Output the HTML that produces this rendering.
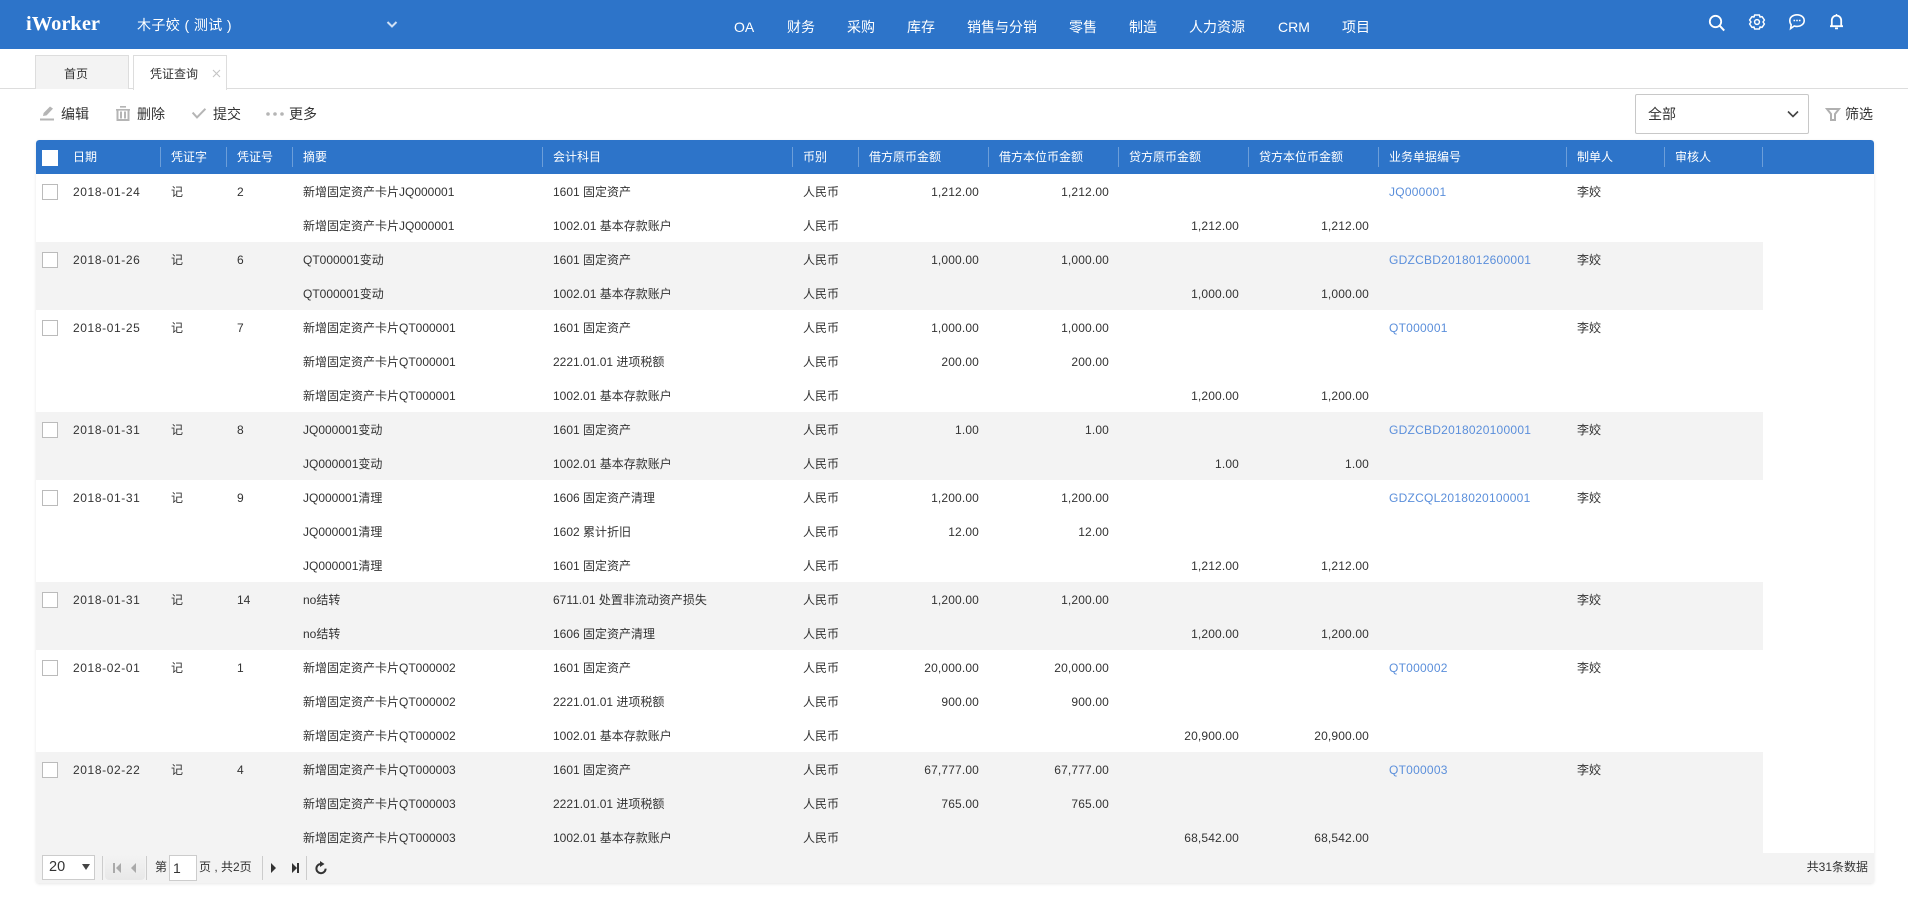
<!DOCTYPE html>
<html lang="zh">
<head>
<meta charset="utf-8">
<title>iWorker</title>
<style>
*{box-sizing:border-box}
html,body{margin:0;padding:0;width:1908px;height:905px;overflow:hidden;background:#fff;font-family:"Liberation Sans","Noto Sans CJK SC",sans-serif;color:#333;font-size:12px}
.a{position:absolute;white-space:nowrap}
#top{position:absolute;left:0;top:0;width:1908px;height:49px;background:#2d74c9;color:#fff}
#top .n{position:absolute;top:0;line-height:54px;font-size:14px;white-space:nowrap}
.tab{position:absolute;top:55px;width:94px;height:34px;border:1px solid #ddd;border-bottom:none;line-height:36px;font-size:12px}
#wrap{position:absolute;left:36px;top:140px;width:1838px;height:743px;background:#fff;box-shadow:0 1px 3px rgba(0,0,0,.1);border-radius:3px;overflow:hidden}
#hb{position:absolute;left:0;top:0;width:1838px;height:34px;background:#2d74c9;border-radius:3px 3px 0 0}
table{position:absolute;left:0;top:0;border-collapse:collapse;table-layout:fixed;width:1727px}
th{position:relative;height:34px;padding:0 0 0 11px;text-align:left;font-weight:normal;color:#fff;font-size:12px;white-space:nowrap;line-height:34px}
th i{position:absolute;left:0;top:7px;width:1px;height:20px;background:rgba(255,255,255,.3)}
td{position:relative;height:34px;padding:2px 0 0 11px;font-size:12px;line-height:32px;white-space:nowrap;color:#333;overflow:hidden}
td:first-child,th:first-child{padding-left:37px}
td.r{text-align:right;padding:2px 9px 0 0;letter-spacing:.15px}
td.d{letter-spacing:.6px}
tr.g td{background:#f3f3f3}
td a{color:#5b8fdb;text-decoration:none;letter-spacing:.25px}
.cb{position:absolute;left:6px;top:10px;width:16px;height:16px;background:#fff;border:1px solid #bbb}
th .cb{border:none}
#bar{position:absolute;left:0;top:713px;width:1838px;height:30px;background:#f3f3f3}
.sep{position:absolute;top:3px;width:1px;height:24px;background:#ccc}
svg{position:absolute;overflow:visible}
</style>
</head>
<body>
<div id="top">
  <div class="a" style="left:26px;top:0;line-height:49px;font-family:'Liberation Serif',serif;font-weight:bold;font-size:20.5px;">iWorker</div>
  <div class="a" style="left:137px;top:0;line-height:50px;font-size:14px;letter-spacing:.4px">木子姣 ( 测试 )</div>
  <svg style="left:386px;top:20px" width="12" height="10" viewBox="0 0 12 10"><path d="M1.5 2 L6 6.5 L10.5 2" fill="none" stroke="#cfe0f5" stroke-width="2"/></svg>
  <span class="n" style="left:734px">OA</span>
  <span class="n" style="left:787px">财务</span>
  <span class="n" style="left:847px">采购</span>
  <span class="n" style="left:907px">库存</span>
  <span class="n" style="left:967px">销售与分销</span>
  <span class="n" style="left:1069px">零售</span>
  <span class="n" style="left:1129px">制造</span>
  <span class="n" style="left:1189px">人力资源</span>
  <span class="n" style="left:1278px">CRM</span>
  <span class="n" style="left:1342px">项目</span>
  <svg style="left:1709px;top:15px" width="16" height="16" viewBox="0 0 16 16"><circle cx="6.5" cy="6.5" r="5.7" fill="none" stroke="#fff" stroke-width="1.8"/><path d="M10.8 10.8 L15.2 15.6" stroke="#fff" stroke-width="2"/></svg>
  <svg style="left:1749px;top:14px" width="16" height="16" viewBox="0 0 16 16"><path d="M5.6 1 H10.4 L11 3 L13 2.6 L15.4 6 L14 8 L15.4 10 L13 13.4 L11 13 L10.4 15 H5.6 L5 13 L3 13.4 L.6 10 L2 8 L.6 6 L3 2.6 L5 3 Z" fill="none" stroke="#fff" stroke-width="1.5" stroke-linejoin="round"/><circle cx="8" cy="8" r="2.4" fill="none" stroke="#fff" stroke-width="1.5"/></svg>
  <svg style="left:1789px;top:14px" width="16" height="17" viewBox="0 0 16 17"><path d="M8 .8 C12 .8 15.2 3.2 15.2 6.6 C15.2 10 12 12.4 8 12.4 C7 12.4 6 12.3 5.2 12 L1.6 14.6 L2.2 10.8 C1.2 9.6 .8 8.2 .8 6.6 C.8 3.2 4 .8 8 .8 Z" fill="none" stroke="#fff" stroke-width="1.6"/><path d="M4.5 6.5h1.6M7.2 6.5h1.6M9.9 6.5h1.6" stroke="#fff" stroke-width="1.6"/></svg>
  <svg style="left:1829px;top:14px" width="15" height="16" viewBox="0 0 15 16"><path d="M1 12.2 H14 M2.8 12 V6.5 C2.8 3.6 4.8 1.6 7.5 1.6 C10.2 1.6 12.2 3.6 12.2 6.5 V12" fill="none" stroke="#fff" stroke-width="1.8"/><path d="M6 13.5 H9 V15.2 H6 Z M6.8 0 H8.2 V2 H6.8 Z" fill="#fff"/></svg>
</div>

<div class="a" style="left:0;top:88px;width:1908px;height:1px;background:#ddd"></div>
<div class="tab" style="left:35px;background:#f3f3f3;padding-left:28px">首页</div>
<div class="tab" style="left:133px;background:#fff;height:35px;padding-left:16px;">凭证查询<svg style="left:77.5px;top:13px" width="9" height="9" viewBox="0 0 9 9"><path d="M1 1 L8 8 M8 1 L1 8" stroke="#c4c4c4" stroke-width="1.1"/></svg></div>

<svg style="left:40px;top:105px" width="15" height="16" viewBox="0 0 15 16"><path d="M0 14.5 H14" stroke="#b5b5b5" stroke-width="2"/><path d="M3 11 L3.6 8 L10 1.5 L13 3.6 L6.6 10.4 Z" fill="#b5b5b5"/></svg>
<div class="a" style="left:61px;top:104px;font-size:14px;line-height:20px">编辑</div>
<svg style="left:116px;top:106px" width="14" height="15" viewBox="0 0 14 15"><path d="M4 .8 H10 M0 3.8 H14" stroke="#b5b5b5" stroke-width="1.6"/><path d="M1.5 4 V14 H12.5 V4 M5 5.5 V12.5 M9 5.5 V12.5" fill="none" stroke="#b5b5b5" stroke-width="2"/></svg>
<div class="a" style="left:137px;top:104px;font-size:14px;line-height:20px">删除</div>
<svg style="left:192px;top:108px" width="14" height="11" viewBox="0 0 14 11"><path d="M.6 4.6 L5 9.4 L13.4 .8" fill="none" stroke="#b5b5b5" stroke-width="2"/></svg>
<div class="a" style="left:213px;top:104px;font-size:14px;line-height:20px">提交</div>
<svg style="left:266px;top:112px" width="18" height="4" viewBox="0 0 18 4"><circle cx="2" cy="2" r="1.8" fill="#b5b5b5"/><circle cx="9" cy="2" r="1.8" fill="#b5b5b5"/><circle cx="16" cy="2" r="1.8" fill="#b5b5b5"/></svg>
<div class="a" style="left:289px;top:104px;font-size:14px;line-height:20px">更多</div>

<div class="a" style="left:1635px;top:94px;width:174px;height:40px;border:1px solid #c8c8c8;border-radius:2px;font-size:14px;line-height:38px;padding-left:12px">全部<svg style="left:151px;top:15px" width="12" height="9" viewBox="0 0 12 9"><path d="M1 1.5 L6 6.5 L11 1.5" fill="none" stroke="#444" stroke-width="1.6"/></svg></div>
<svg style="left:1826px;top:108px" width="14" height="13" viewBox="0 0 14 13"><path d="M1 1 H13 L9 6 V12 H5 V6 Z" fill="none" stroke="#b0b0b0" stroke-width="2"/></svg>
<div class="a" style="left:1845px;top:104px;font-size:14px;line-height:20px">筛选</div>

<div id="wrap">
<div id="hb"></div>
<table>
<colgroup><col style="width:124px"><col style="width:66px"><col style="width:66px"><col style="width:250px"><col style="width:250px"><col style="width:66px"><col style="width:130px"><col style="width:130px"><col style="width:130px"><col style="width:130px"><col style="width:188px"><col style="width:98px"><col style="width:99px"></colgroup>
<tr><th><span class="cb"></span>日期</th><th><i></i>凭证字</th><th><i></i>凭证号</th><th><i></i>摘要</th><th><i></i>会计科目</th><th><i></i>币别</th><th><i></i>借方原币金额</th><th><i></i>借方本位币金额</th><th><i></i>贷方原币金额</th><th><i></i>贷方本位币金额</th><th><i></i>业务单据编号</th><th><i></i>制单人</th><th><i></i>审核人<i style="left:98px"></i></th></tr>

<tr><td class="d"><span class="cb"></span>2018-01-24</td><td>记</td><td>2</td><td>新增固定资产卡片JQ000001</td><td>1601 固定资产</td><td>人民币</td><td class="r">1,212.00</td><td class="r">1,212.00</td><td class="r"></td><td class="r"></td><td><a>JQ000001</a></td><td>李姣</td><td></td></tr>
<tr><td></td><td></td><td></td><td>新增固定资产卡片JQ000001</td><td>1002.01 基本存款账户</td><td>人民币</td><td class="r"></td><td class="r"></td><td class="r">1,212.00</td><td class="r">1,212.00</td><td></td><td></td><td></td></tr>

<tr class="g"><td class="d"><span class="cb"></span>2018-01-26</td><td>记</td><td>6</td><td>QT000001变动</td><td>1601 固定资产</td><td>人民币</td><td class="r">1,000.00</td><td class="r">1,000.00</td><td class="r"></td><td class="r"></td><td><a>GDZCBD2018012600001</a></td><td>李姣</td><td></td></tr>
<tr class="g"><td></td><td></td><td></td><td>QT000001变动</td><td>1002.01 基本存款账户</td><td>人民币</td><td class="r"></td><td class="r"></td><td class="r">1,000.00</td><td class="r">1,000.00</td><td></td><td></td><td></td></tr>

<tr><td class="d"><span class="cb"></span>2018-01-25</td><td>记</td><td>7</td><td>新增固定资产卡片QT000001</td><td>1601 固定资产</td><td>人民币</td><td class="r">1,000.00</td><td class="r">1,000.00</td><td class="r"></td><td class="r"></td><td><a>QT000001</a></td><td>李姣</td><td></td></tr>
<tr><td></td><td></td><td></td><td>新增固定资产卡片QT000001</td><td>2221.01.01 进项税额</td><td>人民币</td><td class="r">200.00</td><td class="r">200.00</td><td class="r"></td><td class="r"></td><td></td><td></td><td></td></tr>
<tr><td></td><td></td><td></td><td>新增固定资产卡片QT000001</td><td>1002.01 基本存款账户</td><td>人民币</td><td class="r"></td><td class="r"></td><td class="r">1,200.00</td><td class="r">1,200.00</td><td></td><td></td><td></td></tr>

<tr class="g"><td class="d"><span class="cb"></span>2018-01-31</td><td>记</td><td>8</td><td>JQ000001变动</td><td>1601 固定资产</td><td>人民币</td><td class="r">1.00</td><td class="r">1.00</td><td class="r"></td><td class="r"></td><td><a>GDZCBD2018020100001</a></td><td>李姣</td><td></td></tr>
<tr class="g"><td></td><td></td><td></td><td>JQ000001变动</td><td>1002.01 基本存款账户</td><td>人民币</td><td class="r"></td><td class="r"></td><td class="r">1.00</td><td class="r">1.00</td><td></td><td></td><td></td></tr>

<tr><td class="d"><span class="cb"></span>2018-01-31</td><td>记</td><td>9</td><td>JQ000001清理</td><td>1606 固定资产清理</td><td>人民币</td><td class="r">1,200.00</td><td class="r">1,200.00</td><td class="r"></td><td class="r"></td><td><a>GDZCQL2018020100001</a></td><td>李姣</td><td></td></tr>
<tr><td></td><td></td><td></td><td>JQ000001清理</td><td>1602 累计折旧</td><td>人民币</td><td class="r">12.00</td><td class="r">12.00</td><td class="r"></td><td class="r"></td><td></td><td></td><td></td></tr>
<tr><td></td><td></td><td></td><td>JQ000001清理</td><td>1601 固定资产</td><td>人民币</td><td class="r"></td><td class="r"></td><td class="r">1,212.00</td><td class="r">1,212.00</td><td></td><td></td><td></td></tr>

<tr class="g"><td class="d"><span class="cb"></span>2018-01-31</td><td>记</td><td>14</td><td>no结转</td><td>6711.01 处置非流动资产损失</td><td>人民币</td><td class="r">1,200.00</td><td class="r">1,200.00</td><td class="r"></td><td class="r"></td><td></td><td>李姣</td><td></td></tr>
<tr class="g"><td></td><td></td><td></td><td>no结转</td><td>1606 固定资产清理</td><td>人民币</td><td class="r"></td><td class="r"></td><td class="r">1,200.00</td><td class="r">1,200.00</td><td></td><td></td><td></td></tr>

<tr><td class="d"><span class="cb"></span>2018-02-01</td><td>记</td><td>1</td><td>新增固定资产卡片QT000002</td><td>1601 固定资产</td><td>人民币</td><td class="r">20,000.00</td><td class="r">20,000.00</td><td class="r"></td><td class="r"></td><td><a>QT000002</a></td><td>李姣</td><td></td></tr>
<tr><td></td><td></td><td></td><td>新增固定资产卡片QT000002</td><td>2221.01.01 进项税额</td><td>人民币</td><td class="r">900.00</td><td class="r">900.00</td><td class="r"></td><td class="r"></td><td></td><td></td><td></td></tr>
<tr><td></td><td></td><td></td><td>新增固定资产卡片QT000002</td><td>1002.01 基本存款账户</td><td>人民币</td><td class="r"></td><td class="r"></td><td class="r">20,900.00</td><td class="r">20,900.00</td><td></td><td></td><td></td></tr>

<tr class="g"><td class="d"><span class="cb"></span>2018-02-22</td><td>记</td><td>4</td><td>新增固定资产卡片QT000003</td><td>1601 固定资产</td><td>人民币</td><td class="r">67,777.00</td><td class="r">67,777.00</td><td class="r"></td><td class="r"></td><td><a>QT000003</a></td><td>李姣</td><td></td></tr>
<tr class="g"><td></td><td></td><td></td><td>新增固定资产卡片QT000003</td><td>2221.01.01 进项税额</td><td>人民币</td><td class="r">765.00</td><td class="r">765.00</td><td class="r"></td><td class="r"></td><td></td><td></td><td></td></tr>
<tr class="g"><td></td><td></td><td></td><td>新增固定资产卡片QT000003</td><td>1002.01 基本存款账户</td><td>人民币</td><td class="r"></td><td class="r"></td><td class="r">68,542.00</td><td class="r">68,542.00</td><td></td><td></td><td></td></tr>
</table>

<div id="bar">
  <div class="a" style="left:6px;top:2px;width:53px;height:25px;border:1px solid #ccc;background:#fff;font-size:14.5px;line-height:23px;padding-left:6px">20<svg style="left:39px;top:8px" width="8" height="6" viewBox="0 0 8 6"><path d="M0 0 H8 L4 6 Z" fill="#444"/></svg></div>
  <div class="sep" style="left:66px"></div>
  <div class="a" style="left:69px;top:2px;width:40px;height:25px;border-radius:4px;background:linear-gradient(#f3f3f3,#e8e8e8)"></div>
  <svg style="left:77px;top:10px" width="24" height="10" viewBox="0 0 24 10"><path d="M0 0 H2 V10 H0 Z M8 0 V10 L3 5 Z M23 0 V10 L18 5 Z" fill="#aaa"/></svg>
  <div class="sep" style="left:110px"></div>
  <div class="a" style="left:119px;top:0;line-height:29px">第</div>
  <div class="a" style="left:133px;top:2px;width:28px;height:26px;border:1px solid #ccc;background:#fff;font-size:14px;line-height:24px;padding-left:3px">1</div>
  <div class="a" style="left:163px;top:0;line-height:29px">页 , 共2页</div>
  <div class="sep" style="left:226px"></div>
  <svg style="left:235px;top:10px" width="28" height="10" viewBox="0 0 28 10"><path d="M0 0 L5 5 L0 10 Z M21 0 L26 5 L21 10 Z M26 0 H28 V10 H26 Z" fill="#333"/></svg>
  <div class="sep" style="left:270px"></div>
  <svg style="left:279px;top:8px" width="12" height="14" viewBox="0 0 12 14"><path d="M6 3 A4.6 4.6 0 1 0 10.6 7.6" fill="none" stroke="#333" stroke-width="2"/><path d="M5 0 L9.5 3 L5 6 Z" fill="#333"/></svg>
  <div class="a" style="right:6px;top:0;line-height:29px">共31条数据</div>
</div>
</div>
</body>
</html>
